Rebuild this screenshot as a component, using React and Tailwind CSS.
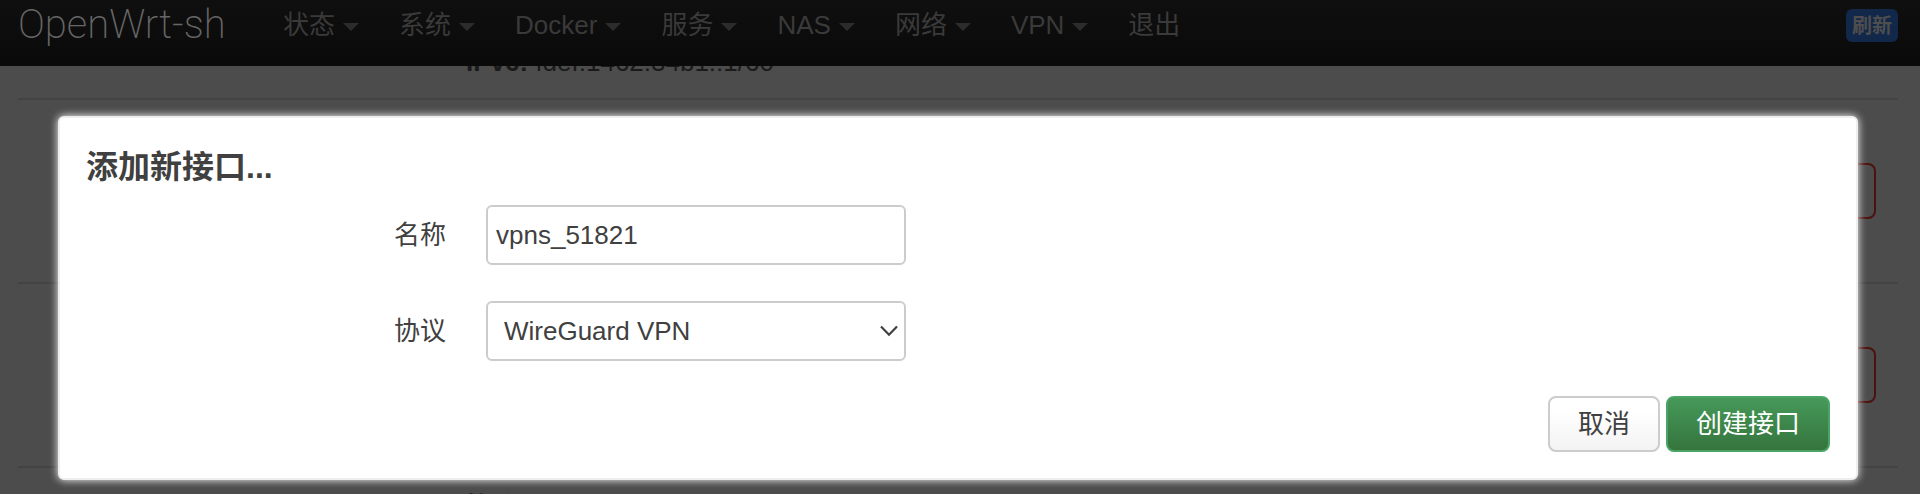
import React from "react";

const menus = ["状态", "系统", "Docker", "服务", "NAS", "网络", "VPN"];

function Row({ children }) {
  return (
    <div className="flex h-[184px] items-center justify-end border-b-2 border-[#434343] px-[22px]">
      {children}
    </div>
  );
}

function DeleteButton() {
  return (
    <button
      type="button"
      aria-label="Delete"
      className="h-[56px] w-[112px] rounded-lg border-2 border-[#4c130e]"
    />
  );
}

export default function App() {
  return (
    <div className="relative h-screen overflow-hidden bg-[#4c4c4c] font-['Liberation_Sans','Noto_Sans_CJK_SC',sans-serif] text-[26px] leading-[36px] text-[#404040]">
      <header className="relative z-10 flex h-[66px] items-start bg-linear-to-b from-[#0f0f0f] to-[#0a0a0a] px-[18px] text-[#3a3a3a]">
        <a href="#" className="w-[245px] shrink-0 font-[Roboto] text-[40px] leading-[50px] font-extralight text-[#666666]">
          OpenWrt-sh
        </a>
        <nav className="flex pt-[7px]">
          {menus.map((m) => (
            <a key={m} href="#" className="flex items-center gap-2 px-5">
              {m}
              <svg width="16" height="8" viewBox="0 0 16 8" className="mt-1 text-[#2c2c2c]" fill="currentColor">
                <path d="M0 0h16L8 8z" />
              </svg>
            </a>
          ))}
          <a href="#" className="px-5">退出</a>
        </nav>
        <button type="button" className="mt-[9px] ml-auto mr-1 h-[33px] rounded-md bg-[#12284a] px-[6px] text-[20px] leading-[35px] font-bold text-[#4e4e4e]">
          刷新
        </button>
      </header>

      <main className="-mt-[26px] pr-[22px] pl-[18px]">
        <div className="h-[60px] border-b-2 border-[#434343] pl-[448px] leading-[44px] text-[#1a1a1a]">
          <b>IPv6:</b> fdef:1462:34b1::1/60
        </div>
        <Row><DeleteButton /></Row>
        <Row><DeleteButton /></Row>
        <div className="pt-[21px] pl-[448px] text-[#1a1a1a]"><b>协议:</b></div>
      </main>

      <div className="absolute inset-x-0 top-[116px] z-20 pr-[62px] pl-[58px]">
        <form
          role="dialog"
          aria-labelledby="dialog-title"
          className="rounded-md border-2 border-[#eeeeee] bg-white px-[26px] pt-[31px] pb-[26px] shadow-[0_0_8px_#ffffff]"
        >
          <h4 id="dialog-title" className="text-[32px] leading-[36px] font-bold">添加新接口...</h4>
          <div className="mt-5 flex items-center gap-10">
            <label htmlFor="name" className="w-[360px] text-right">名称</label>
            <input
              id="name"
              defaultValue="vpns_51821"
              className="h-[60px] w-[420px] rounded-md border-2 border-[#cccccc] px-2 outline-none"
            />
          </div>
          <div className="mt-9 flex items-center gap-10">
            <label htmlFor="proto" className="w-[360px] text-right">协议</label>
            <div className="relative w-[420px]">
              <select
                id="proto"
                className="h-[60px] w-full appearance-none rounded-md border-2 border-[#cccccc] bg-white px-4 outline-none"
              >
                <option>WireGuard VPN</option>
              </select>
              <svg
                width="18"
                height="12"
                viewBox="0 0 18 12"
                className="pointer-events-none absolute top-6 right-2"
                fill="none"
                stroke="#404040"
                strokeWidth="2.2"
              >
                <path d="M1 1.5L9 9.7L17 1.5" />
              </svg>
            </div>
          </div>
          <div className="mt-[35px] flex justify-end gap-[6px]">
            <button
              type="button"
              className="h-[56px] rounded-lg border-2 border-[#cccccc] bg-linear-to-b from-white from-25% to-[#f3f3f3] px-7"
            >
              取消
            </button>
            <button
              type="button"
              className="h-[56px] rounded-lg border-2 border-[#4aa564] bg-linear-to-b from-[#46995a] to-[#35753d] px-7 text-white"
            >
              创建接口
            </button>
          </div>
        </form>
      </div>
    </div>
  );
}
